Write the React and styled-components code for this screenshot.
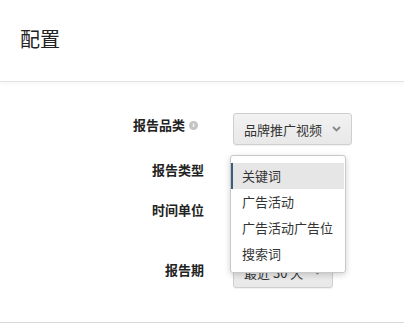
import React from "react";
import styled, { createGlobalStyle } from "styled-components";

const GlobalStyle = createGlobalStyle`
  body {
    margin: 0;
    background: #fff;
    font-family: "Noto Sans CJK SC", "Noto Sans", sans-serif;
    color: #333;
  }
`;

const Header = styled.header`
  box-sizing: border-box;
  height: 82px;
  padding: 28px 0 0 20px;
  border-bottom: 1px solid #e3e3e3;
  box-shadow: 0 3px 3px rgba(0, 0, 0, 0.025);

  h1 {
    margin: 0;
    font-size: 20px;
    line-height: 22px;
    font-weight: normal;
    color: #222;
  }
`;

const Content = styled.section`
  box-sizing: border-box;
  height: 241px;
  padding-top: 31px;
  border-bottom: 1px solid #d9d9d9;
`;

const Row = styled.div`
  display: grid;
  grid-template-columns: 204px auto;
  column-gap: 29px;
  height: ${(p) => p.$height}px;
`;

const Label = styled.div`
  display: flex;
  justify-content: flex-end;
  align-items: center;
  height: 18px;
  padding-top: ${(p) => p.$top || 4}px;
  font-size: 13px;
  line-height: 18px;
  font-weight: bold;
  color: #222;
`;

const Info = styled.span`
  display: inline-flex;
  align-items: center;
  justify-content: center;
  width: 9px;
  height: 9px;
  margin: 1px 6px 0 4px;
  border-radius: 50%;
  background: #c4c4c4;
  color: #fff;
  font-size: 7px;
  font-weight: bold;
  line-height: 1;
  font-family: "Liberation Serif", serif;
`;

const Control = styled.div`
  position: relative;
`;

const SelectButton = styled.button`
  box-sizing: border-box;
  display: inline-flex;
  align-items: center;
  justify-content: space-between;
  gap: 10px;
  height: 32px;
  width: ${(p) => (p.$width ? `${p.$width}px` : "auto")};
  padding: 0 10px;
  border: 1px solid #cfcfcf;
  border-radius: 3px;
  background: linear-gradient(#f2f2f2, #e8e8e8);
  font-family: inherit;
  font-size: 13px;
  color: #333;
  white-space: nowrap;
  box-shadow: 0 1px 1px rgba(0, 0, 0, 0.06);
`;

const Chevron = () => (
  <svg width="9" height="6" viewBox="0 0 9 6">
    <polyline points="1,1 4.5,4.5 8,1" fill="none" stroke="#888" strokeWidth="1.8" />
  </svg>
);

const Menu = styled.ul`
  position: absolute;
  left: -3px;
  top: -3px;
  z-index: 2;
  box-sizing: border-box;
  width: 116px;
  margin: 0;
  padding: 7px 0 5px;
  list-style: none;
  background: #fff;
  border: 1px solid #c8c8c8;
  border-radius: 3px;
  box-shadow: 0 2px 6px rgba(0, 0, 0, 0.18);
`;

const MenuItem = styled.li`
  height: 26px;
  line-height: 26px;
  font-size: 13px;
  color: #333;
  white-space: nowrap;
  padding-left: ${(p) => (p.$active ? 9 : 11)}px;
  margin-right: 1px;
  background: ${(p) => (p.$active ? "#e6e6e6" : "transparent")};
  border-left: ${(p) => (p.$active ? "2px solid #3e5c7c" : "none")};
`;

const options = ["关键词", "广告活动", "广告活动广告位", "搜索词"];

export default function App() {
  return (
    <>
      <GlobalStyle />
      <Header>
        <h1>配置</h1>
      </Header>
      <Content>
        <Row $height={45}>
          <Label $top={3}>
            报告品类
            <Info>i</Info>
          </Label>
          <Control>
            <SelectButton>
              品牌推广视频
              <Chevron />
            </SelectButton>
          </Control>
        </Row>
        <Row $height={40}>
          <Label $top={3}>报告类型</Label>
          <Control>
            <Menu>
              {options.map((o, i) => (
                <MenuItem key={o} $active={i === 0}>
                  {o}
                </MenuItem>
              ))}
            </Menu>
          </Control>
        </Row>
        <Row $height={58}>
          <Label $top={3}>时间单位</Label>
          <Control />
        </Row>
        <Row $height={34}>
          <Label $top={5}>报告期</Label>
          <Control>
            <SelectButton $width={100}>
              最近 30 天
              <Chevron />
            </SelectButton>
          </Control>
        </Row>
      </Content>
    </>
  );
}
